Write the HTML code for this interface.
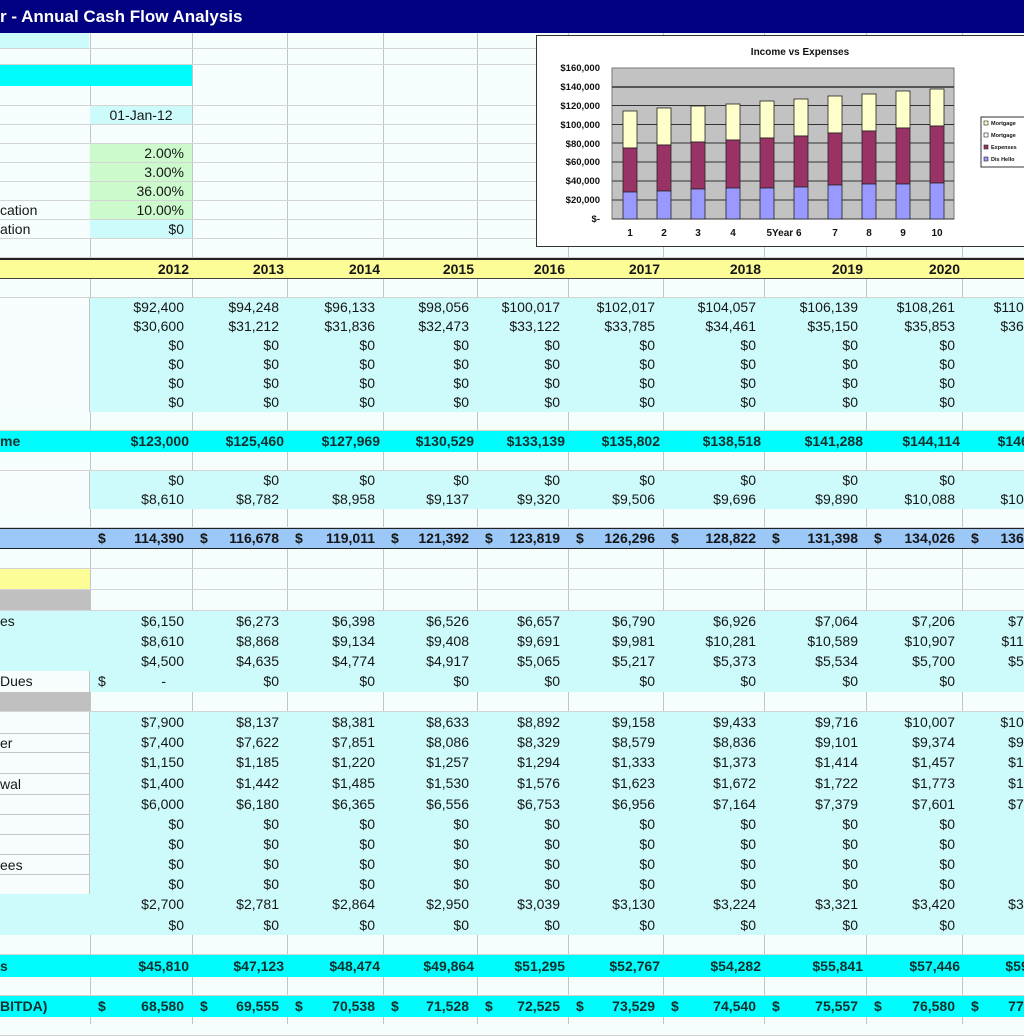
<!DOCTYPE html>
<html><head><meta charset="utf-8"><style>
*{box-sizing:border-box;margin:0;padding:0}
body{width:1024px;height:1024px;overflow:hidden;position:relative;background:#f5fdfd;font-family:"Liberation Sans",Arial,sans-serif;font-size:14px;color:#161616}
.vl{position:absolute;top:33px;bottom:0;width:1px;background:#c4c4c4}
.r{position:absolute;left:0;width:1100px;display:flex;border-bottom:1px solid #d4d4d4}
.r span{flex:none;text-align:right;padding-right:8px;white-space:nowrap;overflow:visible}
.r span:nth-child(1){width:90px;text-align:left;padding:0;overflow:hidden}
.r span:nth-child(2){width:102px}
.r span:nth-child(3){width:95px}
.r span:nth-child(4){width:96px}
.r span:nth-child(5){width:94px}
.r span:nth-child(6){width:91px}
.r span:nth-child(7){width:95px}
.r span:nth-child(8){width:101px}
.r span:nth-child(9){width:102px}
.r span:nth-child(10){width:97px}
.r span:nth-child(11){width:96px}
.lc{background:#cdfbfb;border-bottom:none}
.lc span:first-child{background:#f7fdfd;border-right:1px solid #c4c4c4}
.fc{background:#cdfbfb;border-bottom:none}
.tot{background:#00fdfd;border-bottom:none;font-weight:bold;color:#10302e}
.tot span{padding-right:3px!important}
.noi{background:#9cc8f8;border-top:1px solid #222;border-bottom:1px solid #222;font-weight:bold}
.acc span{display:flex;justify-content:space-between;padding-left:8px}
.acc span:first-child{display:block;padding-left:0}
.b{font-weight:bold}
</style></head><body>
<div style="position:absolute;left:0;top:0;width:1024px;height:33px;background:#000080;color:#fff;font-weight:bold;font-size:17px;line-height:33px;padding-left:0">r - Annual Cash Flow Analysis</div>

<div class="vl" style="left:90px"></div><div class="vl" style="left:192px"></div><div class="vl" style="left:287px"></div><div class="vl" style="left:383px"></div><div class="vl" style="left:477px"></div><div class="vl" style="left:568px"></div><div class="vl" style="left:663px"></div><div class="vl" style="left:764px"></div><div class="vl" style="left:866px"></div><div class="vl" style="left:962px"></div>

<div class="r" style="top:33px;height:16px"></div>
<div style="position:absolute;left:0;top:33px;width:89px;height:15px;background:#cdfbfb"></div>
<div class="r" style="top:49px;height:16px"></div>
<div style="position:absolute;left:0;top:65px;width:192px;height:21px;background:#00fdfd"></div>
<div class="r" style="top:86px;height:20px"></div>
<div class="r" style="top:106px;height:19px;line-height:19px"><span></span><span style="background:#cdfbfb;text-align:center;padding:0">01-Jan-12</span></div>
<div class="r" style="top:125px;height:19px"></div>
<div class="r" style="top:144px;height:19px;line-height:19px"><span></span><span style="background:#ccfacc">2.00%</span></div>
<div class="r" style="top:163px;height:19px;line-height:19px"><span></span><span style="background:#ccfacc">3.00%</span></div>
<div class="r" style="top:182px;height:19px;line-height:19px"><span></span><span style="background:#ccfacc">36.00%</span></div>
<div class="r" style="top:201px;height:19px;line-height:19px"><span>cation</span><span style="background:#ccfacc">10.00%</span></div>
<div class="r" style="top:220px;height:19px;line-height:19px"><span>ation</span><span style="background:#cdfbfb">$0</span></div>
<div class="r" style="top:239px;height:19px"></div>

<div class="r b" style="top:258px;height:21px;line-height:19px;background:#fdfd98;border-top:2px solid #222;border-bottom:1px solid #444"><span></span><span style="padding-right:3px">2012</span><span style="padding-right:3px">2013</span><span style="padding-right:3px">2014</span><span style="padding-right:3px">2015</span><span style="padding-right:3px">2016</span><span style="padding-right:3px">2017</span><span style="padding-right:3px">2018</span><span style="padding-right:3px">2019</span><span style="padding-right:3px">2020</span><span style="padding-right:3px">2021</span></div>
<div class="r" style="top:279px;height:19px"></div>

<div class="r lc" style="top:298px;height:19px;line-height:19px"><span></span><span>$92,400</span><span>$94,248</span><span>$96,133</span><span>$98,056</span><span>$100,017</span><span>$102,017</span><span>$104,057</span><span>$106,139</span><span>$108,261</span><span>$110,426</span></div>
<div class="r lc" style="top:317px;height:19px;line-height:19px"><span></span><span>$30,600</span><span>$31,212</span><span>$31,836</span><span>$32,473</span><span>$33,122</span><span>$33,785</span><span>$34,461</span><span>$35,150</span><span>$35,853</span><span>$36,570</span></div>
<div class="r lc" style="top:336px;height:19px;line-height:19px"><span></span><span>$0</span><span>$0</span><span>$0</span><span>$0</span><span>$0</span><span>$0</span><span>$0</span><span>$0</span><span>$0</span><span>$0</span></div>
<div class="r lc" style="top:355px;height:19px;line-height:19px"><span></span><span>$0</span><span>$0</span><span>$0</span><span>$0</span><span>$0</span><span>$0</span><span>$0</span><span>$0</span><span>$0</span><span>$0</span></div>
<div class="r lc" style="top:374px;height:19px;line-height:19px"><span></span><span>$0</span><span>$0</span><span>$0</span><span>$0</span><span>$0</span><span>$0</span><span>$0</span><span>$0</span><span>$0</span><span>$0</span></div>
<div class="r lc" style="top:393px;height:19px;line-height:19px"><span></span><span>$0</span><span>$0</span><span>$0</span><span>$0</span><span>$0</span><span>$0</span><span>$0</span><span>$0</span><span>$0</span><span>$0</span></div>
<div class="r" style="top:412px;height:19px"></div>
<div class="r tot" style="top:431px;height:21px;line-height:21px"><span>me</span><span>$123,000</span><span>$125,460</span><span>$127,969</span><span>$130,529</span><span>$133,139</span><span>$135,802</span><span>$138,518</span><span>$141,288</span><span>$144,114</span><span>$146,996</span></div>
<div class="r" style="top:452px;height:19px"></div>
<div class="r lc" style="top:471px;height:19px;line-height:19px"><span></span><span>$0</span><span>$0</span><span>$0</span><span>$0</span><span>$0</span><span>$0</span><span>$0</span><span>$0</span><span>$0</span><span>$0</span></div>
<div class="r lc" style="top:490px;height:19px;line-height:19px"><span></span><span>$8,610</span><span>$8,782</span><span>$8,958</span><span>$9,137</span><span>$9,320</span><span>$9,506</span><span>$9,696</span><span>$9,890</span><span>$10,088</span><span>$10,290</span></div>
<div class="r" style="top:509px;height:19px"></div>
<div class="r noi acc" style="top:528px;height:21px;line-height:19px"><span></span><span><i style="font-style:normal">$</i>114,390</span><span><i style="font-style:normal">$</i>116,678</span><span><i style="font-style:normal">$</i>119,011</span><span><i style="font-style:normal">$</i>121,392</span><span><i style="font-style:normal">$</i>123,819</span><span><i style="font-style:normal">$</i>126,296</span><span><i style="font-style:normal">$</i>128,822</span><span><i style="font-style:normal">$</i>131,398</span><span><i style="font-style:normal">$</i>134,026</span><span><i style="font-style:normal">$</i>136,706</span></div>
<div class="r" style="top:549px;height:20px"></div>
<div class="r" style="top:569px;height:21px"><span style="background:#fdfd98"></span></div>
<div class="r" style="top:590px;height:21px"><span style="background:#c0c0c0"></span></div>

<div class="r fc" style="top:611px;height:20px;line-height:20px"><span>es</span><span>$6,150</span><span>$6,273</span><span>$6,398</span><span>$6,526</span><span>$6,657</span><span>$6,790</span><span>$6,926</span><span>$7,064</span><span>$7,206</span><span>$7,350</span></div>
<div class="r fc" style="top:631px;height:20px;line-height:20px"><span></span><span>$8,610</span><span>$8,868</span><span>$9,134</span><span>$9,408</span><span>$9,691</span><span>$9,981</span><span>$10,281</span><span>$10,589</span><span>$10,907</span><span>$11,234</span></div>
<div class="r fc" style="top:651px;height:20px;line-height:20px"><span></span><span>$4,500</span><span>$4,635</span><span>$4,774</span><span>$4,917</span><span>$5,065</span><span>$5,217</span><span>$5,373</span><span>$5,534</span><span>$5,700</span><span>$5,871</span></div>
<div class="r lc" style="top:671px;height:21px;line-height:21px"><span>Dues</span><span style="display:flex;justify-content:space-between;padding-left:8px;padding-right:26px"><i style="font-style:normal">$</i><i style="font-style:normal">-</i></span><span>$0</span><span>$0</span><span>$0</span><span>$0</span><span>$0</span><span>$0</span><span>$0</span><span>$0</span><span>$0</span></div>
<div class="r" style="top:692px;height:20px"><span style="background:#c0c0c0"></span></div>

<div class="r lc" style="top:712px;height:21px;line-height:21px"><span></span><span>$7,900</span><span>$8,137</span><span>$8,381</span><span>$8,633</span><span>$8,892</span><span>$9,158</span><span>$9,433</span><span>$9,716</span><span>$10,007</span><span>$10,307</span></div>
<div class="r lc" style="top:733px;height:19px;line-height:19px"><span style="border-top:1px solid #c4c4c4">er</span><span>$7,400</span><span>$7,622</span><span>$7,851</span><span>$8,086</span><span>$8,329</span><span>$8,579</span><span>$8,836</span><span>$9,101</span><span>$9,374</span><span>$9,655</span></div>
<div class="r lc" style="top:752px;height:21px;line-height:21px"><span style="border-top:1px solid #c4c4c4"></span><span>$1,150</span><span>$1,185</span><span>$1,220</span><span>$1,257</span><span>$1,294</span><span>$1,333</span><span>$1,373</span><span>$1,414</span><span>$1,457</span><span>$1,500</span></div>
<div class="r lc" style="top:773px;height:21px;line-height:21px"><span style="border-top:1px solid #c4c4c4">wal</span><span>$1,400</span><span>$1,442</span><span>$1,485</span><span>$1,530</span><span>$1,576</span><span>$1,623</span><span>$1,672</span><span>$1,722</span><span>$1,773</span><span>$1,827</span></div>
<div class="r lc" style="top:794px;height:20px;line-height:20px"><span style="border-top:1px solid #c4c4c4"></span><span>$6,000</span><span>$6,180</span><span>$6,365</span><span>$6,556</span><span>$6,753</span><span>$6,956</span><span>$7,164</span><span>$7,379</span><span>$7,601</span><span>$7,829</span></div>
<div class="r lc" style="top:814px;height:20px;line-height:20px"><span style="border-top:1px solid #c4c4c4"></span><span>$0</span><span>$0</span><span>$0</span><span>$0</span><span>$0</span><span>$0</span><span>$0</span><span>$0</span><span>$0</span><span>$0</span></div>
<div class="r lc" style="top:834px;height:20px;line-height:20px"><span style="border-top:1px solid #c4c4c4"></span><span>$0</span><span>$0</span><span>$0</span><span>$0</span><span>$0</span><span>$0</span><span>$0</span><span>$0</span><span>$0</span><span>$0</span></div>
<div class="r lc" style="top:854px;height:20px;line-height:20px"><span style="border-top:1px solid #c4c4c4">ees</span><span>$0</span><span>$0</span><span>$0</span><span>$0</span><span>$0</span><span>$0</span><span>$0</span><span>$0</span><span>$0</span><span>$0</span></div>
<div class="r lc" style="top:874px;height:20px;line-height:20px"><span style="border-top:1px solid #c4c4c4"></span><span>$0</span><span>$0</span><span>$0</span><span>$0</span><span>$0</span><span>$0</span><span>$0</span><span>$0</span><span>$0</span><span>$0</span></div>
<div class="r fc" style="top:894px;height:21px;line-height:21px"><span></span><span>$2,700</span><span>$2,781</span><span>$2,864</span><span>$2,950</span><span>$3,039</span><span>$3,130</span><span>$3,224</span><span>$3,321</span><span>$3,420</span><span>$3,523</span></div>
<div class="r fc" style="top:915px;height:20px;line-height:20px"><span></span><span>$0</span><span>$0</span><span>$0</span><span>$0</span><span>$0</span><span>$0</span><span>$0</span><span>$0</span><span>$0</span><span>$0</span></div>
<div class="r" style="top:935px;height:20px"></div>
<div class="r tot" style="top:955px;height:22px;line-height:22px"><span>s</span><span>$45,810</span><span>$47,123</span><span>$48,474</span><span>$49,864</span><span>$51,295</span><span>$52,767</span><span>$54,282</span><span>$55,841</span><span>$57,446</span><span>$59,170</span></div>
<div class="r" style="top:977px;height:19px"></div>
<div class="r tot acc" style="top:996px;height:21px;line-height:21px"><span>BITDA)</span><span style="padding-right:8px!important"><i style="font-style:normal">$</i>68,580</span><span style="padding-right:8px!important"><i style="font-style:normal">$</i>69,555</span><span style="padding-right:8px!important"><i style="font-style:normal">$</i>70,538</span><span style="padding-right:8px!important"><i style="font-style:normal">$</i>71,528</span><span style="padding-right:8px!important"><i style="font-style:normal">$</i>72,525</span><span style="padding-right:8px!important"><i style="font-style:normal">$</i>73,529</span><span style="padding-right:8px!important"><i style="font-style:normal">$</i>74,540</span><span style="padding-right:8px!important"><i style="font-style:normal">$</i>75,557</span><span style="padding-right:8px!important"><i style="font-style:normal">$</i>76,580</span><span style="padding-right:8px!important"><i style="font-style:normal">$</i>77,606</span></div>
<div class="r" style="top:1017px;height:19px"></div>

<svg style="position:absolute;left:536px;top:35px" width="488" height="212" viewBox="0 0 488 212" font-family="Liberation Sans,Arial,sans-serif">
<rect x="0.5" y="0.5" width="490" height="211" fill="#fff" stroke="#333"/>
<text x="264" y="20" font-size="10" font-weight="bold" text-anchor="middle" fill="#111">Income vs Expenses</text>
<rect x="76" y="33" width="342" height="151" fill="#c2c2c2" stroke="#777"/>
<g stroke="#333" stroke-width="1">
<line x1="76" x2="418" y1="165" y2="165"/><line x1="76" x2="418" y1="146" y2="146"/><line x1="76" x2="418" y1="127" y2="127"/><line x1="76" x2="418" y1="108" y2="108"/><line x1="76" x2="418" y1="89.5" y2="89.5"/><line x1="76" x2="418" y1="70.5" y2="70.5"/><line x1="76" x2="418" y1="52" y2="52" stroke-width="1.6"/>
<line x1="76" x2="418" y1="184" y2="184"/>
</g>
<g font-size="9.5" fill="#111" text-anchor="end" font-weight="bold">
<text x="64" y="36">$160,000</text><text x="64" y="55">$140,000</text><text x="64" y="74">$120,000</text><text x="64" y="93">$100,000</text><text x="64" y="112">$80,000</text><text x="64" y="130">$60,000</text><text x="64" y="149">$40,000</text><text x="64" y="168">$20,000</text><text x="64" y="187">$-</text>
</g>
<g stroke="#222" stroke-width="0.8">
<rect x="87" y="76" width="14" height="37" fill="#ffffcc"/><rect x="87" y="113" width="14" height="44" fill="#993366"/><rect x="87" y="157" width="14" height="27" fill="#9999ff"/>
<rect x="121" y="73" width="14" height="37" fill="#ffffcc"/><rect x="121" y="110" width="14" height="46" fill="#993366"/><rect x="121" y="156" width="14" height="28" fill="#9999ff"/>
<rect x="155" y="71" width="14" height="36" fill="#ffffcc"/><rect x="155" y="107" width="14" height="47" fill="#993366"/><rect x="155" y="154" width="14" height="30" fill="#9999ff"/>
<rect x="190" y="69" width="14" height="36" fill="#ffffcc"/><rect x="190" y="105" width="14" height="48" fill="#993366"/><rect x="190" y="153" width="14" height="31" fill="#9999ff"/>
<rect x="224" y="66" width="14" height="37" fill="#ffffcc"/><rect x="224" y="103" width="14" height="50" fill="#993366"/><rect x="224" y="153" width="14" height="31" fill="#9999ff"/>
<rect x="258" y="64" width="14" height="37" fill="#ffffcc"/><rect x="258" y="101" width="14" height="51" fill="#993366"/><rect x="258" y="152" width="14" height="32" fill="#9999ff"/>
<rect x="292" y="61" width="14" height="37" fill="#ffffcc"/><rect x="292" y="98" width="14" height="52" fill="#993366"/><rect x="292" y="150" width="14" height="34" fill="#9999ff"/>
<rect x="326" y="59" width="14" height="37" fill="#ffffcc"/><rect x="326" y="96" width="14" height="53" fill="#993366"/><rect x="326" y="149" width="14" height="35" fill="#9999ff"/>
<rect x="360" y="56" width="14" height="37" fill="#ffffcc"/><rect x="360" y="93" width="14" height="56" fill="#993366"/><rect x="360" y="149" width="14" height="35" fill="#9999ff"/>
<rect x="394" y="54" width="14" height="37" fill="#ffffcc"/><rect x="394" y="91" width="14" height="57" fill="#993366"/><rect x="394" y="148" width="14" height="36" fill="#9999ff"/>
</g>
<g font-size="10" fill="#111" text-anchor="middle" font-weight="bold">
<text x="94" y="201">1</text><text x="128" y="201">2</text><text x="162" y="201">3</text><text x="197" y="201">4</text><text x="248" y="201">5Year 6</text><text x="299" y="201">7</text><text x="333" y="201">8</text><text x="367" y="201">9</text><text x="401" y="201">10</text>
</g>
<rect x="445" y="82" width="50" height="50" fill="#fff" stroke="#333"/>
<g font-size="5.5" font-weight="bold" fill="#111">
<rect x="448" y="86" width="4" height="4" fill="#ffffcc" stroke="#222" stroke-width=".6"/><text x="455" y="90">Mortgage</text>
<rect x="448" y="98" width="4" height="4" fill="#fff" stroke="#222" stroke-width=".6"/><text x="455" y="102">Mortgage</text>
<rect x="448" y="110" width="4" height="4" fill="#993366" stroke="#222" stroke-width=".6"/><text x="455" y="114">Expenses</text>
<rect x="448" y="122" width="4" height="4" fill="#9999ff" stroke="#222" stroke-width=".6"/><text x="455" y="126">Dis Hello</text>
</g>
</svg>
</body></html>
